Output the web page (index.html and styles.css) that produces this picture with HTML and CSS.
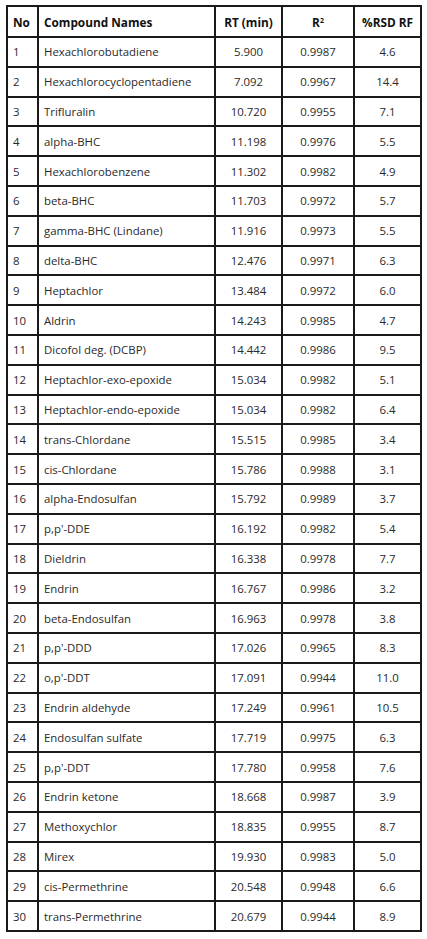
FILE: index.html
```html
<!DOCTYPE html>
<html>
<head>
<meta charset="utf-8">
<link rel="stylesheet" href="styles.css">
</head>
<body>
<table class="data">
  <colgroup>
    <col class="c-no"><col class="c-name"><col class="c-rt"><col class="c-r2"><col class="c-rsd">
  </colgroup>
  <thead>
    <tr><th class="left">No</th><th class="left">Compound Names</th><th>RT (min)</th><th>R<sup>2</sup></th><th>%RSD RF</th></tr>
  </thead>
  <tbody>
    <tr><td class="left">1</td><td class="left">Hexachlorobutadiene</td><td>5.900</td><td>0.9987</td><td>4.6</td></tr>
    <tr><td class="left">2</td><td class="left">Hexachlorocyclopentadiene</td><td>7.092</td><td>0.9967</td><td>14.4</td></tr>
    <tr><td class="left">3</td><td class="left">Trifluralin</td><td>10.720</td><td>0.9955</td><td>7.1</td></tr>
    <tr><td class="left">4</td><td class="left">alpha-BHC</td><td>11.198</td><td>0.9976</td><td>5.5</td></tr>
    <tr><td class="left">5</td><td class="left">Hexachlorobenzene</td><td>11.302</td><td>0.9982</td><td>4.9</td></tr>
    <tr><td class="left">6</td><td class="left">beta-BHC</td><td>11.703</td><td>0.9972</td><td>5.7</td></tr>
    <tr><td class="left">7</td><td class="left">gamma-BHC (Lindane)</td><td>11.916</td><td>0.9973</td><td>5.5</td></tr>
    <tr><td class="left">8</td><td class="left">delta-BHC</td><td>12.476</td><td>0.9971</td><td>6.3</td></tr>
    <tr><td class="left">9</td><td class="left">Heptachlor</td><td>13.484</td><td>0.9972</td><td>6.0</td></tr>
    <tr><td class="left">10</td><td class="left">Aldrin</td><td>14.243</td><td>0.9985</td><td>4.7</td></tr>
    <tr><td class="left">11</td><td class="left">Dicofol deg. (DCBP)</td><td>14.442</td><td>0.9986</td><td>9.5</td></tr>
    <tr><td class="left">12</td><td class="left">Heptachlor-exo-epoxide</td><td>15.034</td><td>0.9982</td><td>5.1</td></tr>
    <tr><td class="left">13</td><td class="left">Heptachlor-endo-epoxide</td><td>15.034</td><td>0.9982</td><td>6.4</td></tr>
    <tr><td class="left">14</td><td class="left">trans-Chlordane</td><td>15.515</td><td>0.9985</td><td>3.4</td></tr>
    <tr><td class="left">15</td><td class="left">cis-Chlordane</td><td>15.786</td><td>0.9988</td><td>3.1</td></tr>
    <tr><td class="left">16</td><td class="left">alpha-Endosulfan</td><td>15.792</td><td>0.9989</td><td>3.7</td></tr>
    <tr><td class="left">17</td><td class="left">p,p'-DDE</td><td>16.192</td><td>0.9982</td><td>5.4</td></tr>
    <tr><td class="left">18</td><td class="left">Dieldrin</td><td>16.338</td><td>0.9978</td><td>7.7</td></tr>
    <tr><td class="left">19</td><td class="left">Endrin</td><td>16.767</td><td>0.9986</td><td>3.2</td></tr>
    <tr><td class="left">20</td><td class="left">beta-Endosulfan</td><td>16.963</td><td>0.9978</td><td>3.8</td></tr>
    <tr><td class="left">21</td><td class="left">p,p'-DDD</td><td>17.026</td><td>0.9965</td><td>8.3</td></tr>
    <tr><td class="left">22</td><td class="left">o,p'-DDT</td><td>17.091</td><td>0.9944</td><td>11.0</td></tr>
    <tr><td class="left">23</td><td class="left">Endrin aldehyde</td><td>17.249</td><td>0.9961</td><td>10.5</td></tr>
    <tr><td class="left">24</td><td class="left">Endosulfan sulfate</td><td>17.719</td><td>0.9975</td><td>6.3</td></tr>
    <tr><td class="left">25</td><td class="left">p,p'-DDT</td><td>17.780</td><td>0.9958</td><td>7.6</td></tr>
    <tr><td class="left">26</td><td class="left">Endrin ketone</td><td>18.668</td><td>0.9987</td><td>3.9</td></tr>
    <tr><td class="left">27</td><td class="left">Methoxychlor</td><td>18.835</td><td>0.9955</td><td>8.7</td></tr>
    <tr><td class="left">28</td><td class="left">Mirex</td><td>19.930</td><td>0.9983</td><td>5.0</td></tr>
    <tr><td class="left">29</td><td class="left">cis-Permethrine</td><td>20.548</td><td>0.9948</td><td>6.6</td></tr>
    <tr><td class="left">30</td><td class="left">trans-Permethrine</td><td>20.679</td><td>0.9944</td><td>8.9</td></tr>
  </tbody>
</table>
</body>
</html>
```
FILE: styles.css
```css
html, body {
  margin: 0;
  padding: 0;
  background: #ffffff;
}
body {
  padding: 5px 0 0 6px;
  font-family: "Open Sans", "Liberation Sans", sans-serif;
  font-size: 11.4px;
  color: #2a2a2a;
}
.data {
  border-collapse: collapse;
  table-layout: fixed;
  width: 416px;
  border: 2px solid #1a1a1a;
}
.c-no { width: 31px; }
.c-name { width: 177px; }
.c-rt { width: 67px; }
.c-r2 { width: 72px; }
.c-rsd { width: 67px; }
.data th, .data td {
  border: 2px solid #1a1a1a;
  text-align: center;
  padding: 0 5px;
  white-space: nowrap;
  overflow: hidden;
}
.data th {
  height: 29px;
  font-size: 11.8px;
  font-weight: 700;
  color: #111111;
}
.data td {
  height: 27.8px;
}
.data .left {
  text-align: left;
}
.data sup {
  font-size: 7px;
  line-height: 0;
  vertical-align: 4px;
}
```
